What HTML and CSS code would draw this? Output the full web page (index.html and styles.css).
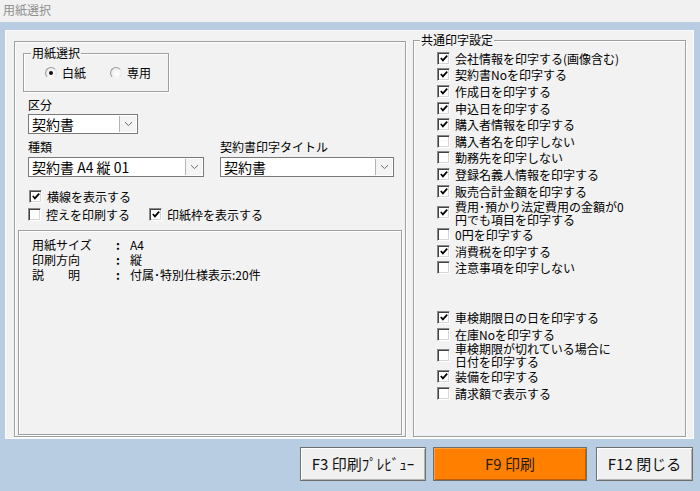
FILE: index.html
```html
<!DOCTYPE html>
<html lang="ja">
<head>
<meta charset="utf-8">
<title>用紙選択</title>
<link rel="stylesheet" href="styles.css">
</head>
<body>
<div class="titlebar">用紙選択</div>
<div class="main">
  <div class="panel">
    <div class="leftbox">
      <div class="group paper">
        <span class="legend">用紙選択</span>
        <div class="radios">
          <label class="radio"><span class="rb on"></span><span>白紙</span></label>
          <label class="radio"><span class="rb"></span><span>専用</span></label>
        </div>
      </div>

      <div class="field kubun">
        <div class="lbl">区分</div>
        <div class="select w-kubun"><span class="val">契約書</span><span class="btn"><svg width="9" height="6" viewBox="0 0 9 6"><path d="M1 1.2 L4.5 4.6 L8 1.2" fill="none" stroke="#6a6a6a" stroke-width="1"/></svg></span></div>
      </div>

      <div class="field-row">
        <div class="field">
          <div class="lbl">種類</div>
          <div class="select w-kind"><span class="val">契約書 A4 縦 01</span><span class="btn"><svg width="9" height="6" viewBox="0 0 9 6"><path d="M1 1.2 L4.5 4.6 L8 1.2" fill="none" stroke="#6a6a6a" stroke-width="1"/></svg></span></div>
        </div>
        <div class="field">
          <div class="lbl">契約書印字タイトル</div>
          <div class="select w-title"><span class="val">契約書</span><span class="btn"><svg width="9" height="6" viewBox="0 0 9 6"><path d="M1 1.2 L4.5 4.6 L8 1.2" fill="none" stroke="#6a6a6a" stroke-width="1"/></svg></span></div>
        </div>
      </div>

      <div class="opt-row first">
        <label class="ck"><span class="cb on"><svg width="11" height="11" viewBox="0 0 11 11"><path d="M2 5 L4.3 7.6 L9 2.4" fill="none" stroke="#000" stroke-width="1.9"/></svg></span><span class="txt">横線を表示する</span></label>
      </div>
      <div class="opt-row second">
        <label class="ck"><span class="cb"></span><span class="txt">控えを印刷する</span></label>
        <label class="ck stamp"><span class="cb on"><svg width="11" height="11" viewBox="0 0 11 11"><path d="M2 5 L4.3 7.6 L9 2.4" fill="none" stroke="#000" stroke-width="1.9"/></svg></span><span class="txt">印紙枠を表示する</span></label>
      </div>

      <div class="info">
        <div class="info-row"><span class="k">用紙サイズ</span><span class="c">:</span><span class="v">A4</span></div>
        <div class="info-row"><span class="k">印刷方向</span><span class="c">:</span><span class="v">縦</span></div>
        <div class="info-row"><span class="k spread">説　　明</span><span class="c">:</span><span class="v">付属･特別仕様表示:20件</span></div>
      </div>
    </div>

    <div class="group rightgroup">
      <span class="legend">共通印字設定</span>
      <div class="list">
        <label class="ck row"><span class="cb on"><svg width="11" height="11" viewBox="0 0 11 11"><path d="M2 5 L4.3 7.6 L9 2.4" fill="none" stroke="#000" stroke-width="1.9"/></svg></span><span class="txt">会社情報を印字する(画像含む)</span></label>
        <label class="ck row"><span class="cb on"><svg width="11" height="11" viewBox="0 0 11 11"><path d="M2 5 L4.3 7.6 L9 2.4" fill="none" stroke="#000" stroke-width="1.9"/></svg></span><span class="txt">契約書Noを印字する</span></label>
        <label class="ck row"><span class="cb on"><svg width="11" height="11" viewBox="0 0 11 11"><path d="M2 5 L4.3 7.6 L9 2.4" fill="none" stroke="#000" stroke-width="1.9"/></svg></span><span class="txt">作成日を印字する</span></label>
        <label class="ck row"><span class="cb on"><svg width="11" height="11" viewBox="0 0 11 11"><path d="M2 5 L4.3 7.6 L9 2.4" fill="none" stroke="#000" stroke-width="1.9"/></svg></span><span class="txt">申込日を印字する</span></label>
        <label class="ck row"><span class="cb on"><svg width="11" height="11" viewBox="0 0 11 11"><path d="M2 5 L4.3 7.6 L9 2.4" fill="none" stroke="#000" stroke-width="1.9"/></svg></span><span class="txt">購入者情報を印字する</span></label>
        <label class="ck row"><span class="cb"></span><span class="txt">購入者名を印字しない</span></label>
        <label class="ck row"><span class="cb"></span><span class="txt">勤務先を印字しない</span></label>
        <label class="ck row"><span class="cb on"><svg width="11" height="11" viewBox="0 0 11 11"><path d="M2 5 L4.3 7.6 L9 2.4" fill="none" stroke="#000" stroke-width="1.9"/></svg></span><span class="txt">登録名義人情報を印字する</span></label>
        <label class="ck row"><span class="cb on"><svg width="11" height="11" viewBox="0 0 11 11"><path d="M2 5 L4.3 7.6 L9 2.4" fill="none" stroke="#000" stroke-width="1.9"/></svg></span><span class="txt">販売合計金額を印字する</span></label>
        <label class="ck row two"><span class="cb on"><svg width="11" height="11" viewBox="0 0 11 11"><path d="M2 5 L4.3 7.6 L9 2.4" fill="none" stroke="#000" stroke-width="1.9"/></svg></span><span class="txt">費用･預かり法定費用の金額が0<br>円でも項目を印字する</span></label>
        <label class="ck row"><span class="cb"></span><span class="txt">0円を印字する</span></label>
        <label class="ck row"><span class="cb on"><svg width="11" height="11" viewBox="0 0 11 11"><path d="M2 5 L4.3 7.6 L9 2.4" fill="none" stroke="#000" stroke-width="1.9"/></svg></span><span class="txt">消費税を印字する</span></label>
        <label class="ck row"><span class="cb"></span><span class="txt">注意事項を印字しない</span></label>

        <label class="ck row gap"><span class="cb on"><svg width="11" height="11" viewBox="0 0 11 11"><path d="M2 5 L4.3 7.6 L9 2.4" fill="none" stroke="#000" stroke-width="1.9"/></svg></span><span class="txt">車検期限日の日を印字する</span></label>
        <label class="ck row"><span class="cb"></span><span class="txt">在庫Noを印字する</span></label>
        <label class="ck row two short"><span class="cb"></span><span class="txt">車検期限が切れている場合に<br>日付を印字する</span></label>
        <label class="ck row"><span class="cb on"><svg width="11" height="11" viewBox="0 0 11 11"><path d="M2 5 L4.3 7.6 L9 2.4" fill="none" stroke="#000" stroke-width="1.9"/></svg></span><span class="txt">装備を印字する</span></label>
        <label class="ck row"><span class="cb"></span><span class="txt">請求額で表示する</span></label>
      </div>
    </div>
  </div>

  <div class="buttons">
    <button class="b b-preview">F3 印刷ﾌﾟﾚﾋﾞｭｰ</button>
    <button class="b b-print">F9 印刷</button>
    <button class="b b-close">F12 閉じる</button>
  </div>
</div>
</body>
</html>
```

FILE: styles.css
```css
* { box-sizing: border-box; }

html, body {
  margin: 0;
  padding: 0;
}

body {
  width: 700px;
  height: 491px;
  overflow: hidden;
  background: #b9cde2;
  font-family: "Noto Sans CJK JP", "Noto Sans", sans-serif;
  font-size: 12px;
  color: #000;
}

.titlebar {
  height: 22px;
  background: #f1f1f1;
  color: #8e8e8e;
  font-size: 12px;
  line-height: 20px;
  padding-left: 3px;
}

.main {
  padding: 8px 6px 0 5px;
}

.panel {
  height: 409px;
  background: #f2f2f2;
  box-shadow: inset 0 0 0 1px #fbfbfb;
  display: flex;
  align-items: flex-start;
  padding: 11px 0 0 9px;
}

/* etched group box */
.group {
  position: relative;
  border: 1px solid #a0a0a0;
  box-shadow: inset 1px 1px 0 #fff, 1px 1px 0 #fff;
}

.legend {
  position: absolute;
  top: -8px;
  left: 7px;
  padding: 0 1px;
  background: #f2f2f2;
  line-height: 14px;
  font-size: 12px;
}

.leftbox {
  width: 392px;
  height: 396px;
  border: 1px solid #a0a0a0;
  box-shadow: inset 1px 1px 0 #fff, 1px 1px 0 #fff;
  padding: 0 3px 1px 3px;
  display: flex;
  flex-direction: column;
}

.paper {
  width: 146px;
  height: 39px;
  margin: 11px 0 0 5px;
  flex: none;
}

.radios {
  display: flex;
  padding: 12px 0 0 21px;
}

.radio {
  display: flex;
  align-items: center;
  gap: 5px;
  height: 14px;
  line-height: 14px;
  font-size: 12px;
}

.radio + .radio {
  margin-left: 24px;
}

.rb {
  width: 12px;
  height: 12px;
  border-radius: 50%;
  background: radial-gradient(circle at 60% 60%, #ffffff 0, #f4f4f4 45%, #dcdcdc 100%);
  border: 1px solid;
  border-color: #9a9a9a #e6e6e6 #f6f6f6 #9a9a9a;
  position: relative;
}

.rb.on::after {
  content: "";
  position: absolute;
  left: 3px;
  top: 3px;
  width: 4px;
  height: 4px;
  border-radius: 50%;
  background: #111;
}

.field {
  display: flex;
  flex-direction: column;
}

.lbl {
  line-height: 13px;
  height: 13px;
  font-size: 12px;
}

.kubun {
  margin: 6px 0 0 10px;
}

.kubun .select {
  margin-top: 3px;
}

.field-row {
  display: flex;
  gap: 16px;
  margin: 6px 0 0 10px;
}

.field-row .select {
  margin-top: 4px;
}

.select {
  height: 20px;
  background: #fff;
  border: 1px solid #7a7a7a;
  display: flex;
  align-items: stretch;
}

.select .val {
  flex: 1;
  font-size: 14px;
  line-height: 18px;
  padding-left: 3px;
  white-space: nowrap;
  overflow: hidden;
}

.select .btn {
  width: 17px;
  background: #f4f4f4;
  border-left: 1px solid #b4b4b4;
  margin: 1px 1px 1px 0;
  display: flex;
  align-items: center;
  justify-content: center;
}

.w-kubun { width: 110px; }
.w-kind { width: 176px; }
.w-title { width: 174px; }

.ck {
  display: flex;
  align-items: center;
  gap: 5px;
}

.cb {
  flex: none;
  width: 13px;
  height: 13px;
  background: #fff;
  border: 1px solid;
  border-color: #8a8a8a #ffffff #ffffff #8a8a8a;
  box-shadow: inset 1px 1px 0 #424242, inset -1px -1px 0 #d6d6d6;
  display: flex;
  align-items: center;
  justify-content: center;
}

.cb svg {
  display: block;
  margin: 0 0 0 1px;
}

.txt {
  line-height: 13px;
  font-size: 12px;
  white-space: nowrap;
}

.opt-row {
  display: flex;
  height: 13px;
}

.opt-row.first {
  margin: 13px 0 0 11px;
}

.opt-row.second {
  margin: 5px 0 0 10px;
}

.opt-row .stamp {
  margin-left: 19px;
}

.info {
  flex: 1;
  margin-top: 9px;
  border: 1px solid #a0a0a0;
  box-shadow: inset 1px 1px 0 #fff, 1px 1px 0 #fff;
  padding: 6px 0 0 13px;
}

.info-row {
  display: grid;
  grid-template-columns: 84px 14px auto;
  line-height: 15px;
  height: 15px;
  font-size: 12px;
}

.info-row .c {
  font-weight: bold;
}

.rightgroup {
  width: 273px;
  height: 397px;
  margin: -1px 0 0 7px;
}

.rightgroup .legend {
  top: -8px;
  left: 6px;
}

.list {
  display: flex;
  flex-direction: column;
  padding: 9px 0 0 23px;
}

.list .row {
  height: 16.6px;
}

.list .row.two {
  height: 27px;
}

.list .row.two .txt {
  line-height: 13px;
}

.list .row.two.short {
  height: 26px;
}

.list .row.gap {
  margin-top: 33px;
}

.buttons {
  display: flex;
  justify-content: flex-end;
  margin: 8px 1px 0 0;
}

.b {
  height: 34px;
  font-family: "Noto Sans CJK JP", "Noto Sans", sans-serif;
  font-size: 15px;
  line-height: 20px;
  color: #111;
  background: #f0f0f0;
  border: 1px solid #6f6f6f;
  box-shadow: inset 1px 1px 0 #ffffff, inset -1px -1px 0 #b5b5b5;
  padding: 0;
  margin: 0;
}

.b-preview { width: 126px; }
.b-print {
  width: 154px;
  margin-left: 7px;
  background: #ff8000;
  color: #2a1a0a;
  box-shadow: inset 1px 1px 0 #ffa040, inset -1px -1px 0 #c06000;
}
.b-close { width: 97px; margin-left: 9px; }
```
